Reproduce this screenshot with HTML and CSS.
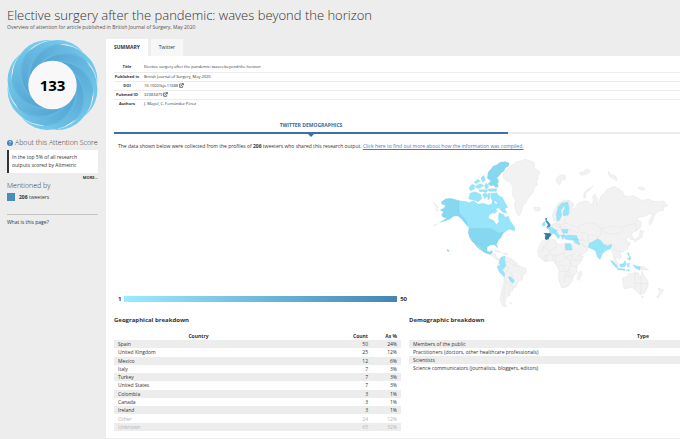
FILE: index.html
```html
<!DOCTYPE html>
<html lang="en">
<head>
  <meta charset="UTF-8">
  <meta name="viewport" content="width=device-width, initial-scale=1.0">
  <title>Elective surgery after the pandemic: waves beyond the horizon</title>
  <link rel="stylesheet" href="styles.css">
</head>
<body>
  <header class="page-header">
    <h1>Elective surgery after the pandemic: waves beyond the horizon</h1>
    <p>Overview of attention for article published in British Journal of Surgery, May 2020</p>
  </header>
  <div class="layout">
    <aside class="sidebar">
      <div class="score">
        <svg class="donut" viewBox="-46 -46 92 92" aria-hidden="true">
          <defs>
            <linearGradient id="petal" gradientUnits="userSpaceOnUse" x1="45" y1="0" x2="-24" y2="0">
              <stop offset="0" stop-color="#76ccee"/>
              <stop offset="1" stop-color="#55a5d2"/>
            </linearGradient>
            <radialGradient id="shade" gradientUnits="userSpaceOnUse" cx="12" cy="0" r="33">
              <stop offset="0.55" stop-color="#3a86b8" stop-opacity="0.7"/>
              <stop offset="1" stop-color="#4a9aca" stop-opacity="0"/>
            </radialGradient>
            <path id="tile" d="M45 0 A33 33 0 0 1 -21 0 L-14.8 -14.8 A33 33 0 0 0 31.8 31.8 A33 33 0 0 0 45 0Z"/>
            <g id="p">
              <use href="#tile" fill="url(#petal)"/>
              <use href="#tile" fill="url(#shade)"/>
            </g>
          </defs>
          <circle r="42" fill="#64b7de"/>
          <g transform="scale(-1 1)">
            <use href="#p"/>
            <use href="#p" transform="rotate(45)"/>
            <use href="#p" transform="rotate(90)"/>
            <use href="#p" transform="rotate(135)"/>
            <use href="#p" transform="rotate(180)"/>
            <use href="#p" transform="rotate(225)"/>
            <use href="#p" transform="rotate(270)"/>
            <use href="#p" transform="rotate(315)"/>
          </g>
          <circle r="24.5" fill="#f8f8f8"/>
        </svg>
        <span class="score-value">133</span>
      </div>
      <h2>
        <svg class="help" viewBox="0 0 12 12" aria-hidden="true"><circle cx="6" cy="6" r="6" fill="#3f7fc0"/><path d="M4 4.6C4 2 8 2 8 4.4 8 5.8 6 5.8 6 7.2M6 8.4V9.8" fill="none" stroke="#fff" stroke-width="1.5"/></svg>
        About this Attention Score
      </h2>
      <p class="context">In the top 5% of all research outputs scored by Altmetric</p>
      <a class="more" href="#">MORE...</a>
      <h2>Mentioned by</h2>
      <p class="mention"><span class="swatch"></span><span><b>206</b> tweeters</span></p>
      <a class="what" href="#">What is this page?</a>
    </aside>
    <main>
      <nav class="tabs">
        <a class="tab active" href="#">SUMMARY</a>
        <a class="tab" href="#">Twitter</a>
      </nav>
      <div class="panel">
        <div class="content">
          <table class="meta">
            <tr><th>Title</th><td>Elective surgery after the pandemic: waves beyond the horizon</td></tr>
            <tr><th>Published in</th><td>British Journal of Surgery, May 2020</td></tr>
            <tr><th>DOI</th><td>10.1002/bjs.11688 <a href="#" aria-label="Open DOI"><svg class="ext" viewBox="0 0 15 14"><path d="M8 2.5H2V12.5H11V8M5 9L12 2.5M8.5 1.2H13.5V6" fill="none" stroke="#333" stroke-width="2"/></svg></a></td></tr>
            <tr><th>Pubmed ID</th><td>32383479 <a href="#" aria-label="Open Pubmed"><svg class="ext" viewBox="0 0 15 14"><path d="M8 2.5H2V12.5H11V8M5 9L12 2.5M8.5 1.2H13.5V6" fill="none" stroke="#333" stroke-width="2"/></svg></a></td></tr>
            <tr><th>Authors</th><td>J. Mayol, C. Fernández Pérez</td></tr>
          </table>
          <div class="section-tabs"><a class="section-tab" href="#">TWITTER DEMOGRAPHICS</a></div>
          <p class="intro">The data shown below were collected from the profiles of <b>206</b> tweeters who shared this research output. <a href="#">Click here to find out more about how the information was compiled.</a></p>
          <div class="geo">
            <div class="scale"><span>1</span><span class="scale-bar"></span><span>50</span></div>
            <svg class="map" viewBox="0 0 765 480" role="img" aria-label="World map of tweeters">
              <!-- Americas -->
              <g class="land">
                <path d="M255 50L275 35 288 33 300 28 325 35 330 45 326 52 340 62 345 70 337 78 340 88 334 92 338 105 328 112 325 125 310 145 304 156 295 165 288 190 282 198 275 190 268 165 273 150 264 140 262 125 264 112 257 98 245 92 232 80 240 65Z"/>
                <path d="M325 174L329 171 335 173 342 171 347 176 343 182 332 184Z"/>
                <path d="M194 313L202 306 212 313 215 325 228 328 226 332 214 329 205 320Z"/>
                <path d="M206 301L218 301 230 308 218 306ZM235 309L248 310 246 315 236 313Z"/>
                <path d="M228 322L240 319 262 328 275 340 285 350 302 354 305 366 292 378 292 388 280 395 272 412 262 416 264 422 254 426 255 436 246 440 242 448 240 458 244 470 232 467 226 448 230 420 236 400 238 380 222 365 216 350 222 338Z"/>
                <path d="M240 332L252 337 260 328M252 337L264 346 275 340M264 346L285 350M242 347L250 352 246 364 238 370M246 364L260 370 264 382 268 392M238 380L242 398 250 398 258 402 264 412 272 412M242 398L238 415 236 450M258 402L252 418" fill="none"/>
                <path d="M254 458L261 458 256 461ZM24 158L34 165 40 174 33 170ZM30 175L40 181 35 182ZM25 226L40 221 29 227Z"/>
              </g>
              <g class="l2">
                <path d="M50 155L62 147 75 145 102 152 102 190 112 196 125 212 130 230 122 222 108 205 98 197 85 199 76 206 58 213 46 217 66 204 55 202 50 194 56 186 46 180 58 174 62 166 50 162Z"/>
                <path class="l1" d="M102 152L125 155 132 158 145 153 160 162 175 160 190 166 200 162 204 148 212 163 222 158 222 172 208 180 203 188 192 195 190 205 205 211 214 224 222 215 220 200 222 188 236 194 240 202 250 199 256 214 264 224 269 240 258 237 248 239 240 246 232 250 222 250 212 244 200 236 132 235 125 212 112 196 102 190Z"/>
                <path d="M132 235L200 236 212 244 222 250 236 247 228 262 221 270 216 280 214 284 218 294 209 284 195 285 188 290 180 288 172 282 165 282 150 278 142 275 134 262 130 248Z"/>
                <path d="M145 276L165 282 172 282 180 288 186 290 186 302 192 306 202 302 200 310 194 313 180 308 168 300 160 285 158 284 165 299 156 290Z"/>
                <path d="M215 45L226 37 240 35 252 39 251 47 240 55 237 63 228 68 222 78 215 83 221 93 217 101 220 110 212 112 205 105 198 108 189 102 198 93 187 84 190 66 198 58 204 49Z"/>
                <path class="l1" d="M196 131L215 128 223 139 232 142 241 160 248 172 239 176 246 190 232 186 222 174 224 165 211 153 201 151Z"/>
                <path class="l1" d="M135 130L150 125 166 132 171 145 160 155 145 150 131 147ZM132 114L141 103 149 106 148 117 137 122ZM147 97L160 88 165 94 154 101ZM152 108L165 101 176 106 165 115 153 114ZM168 84L176 76 181 89 173 97ZM178 108L185 98 191 111 183 118ZM162 119L188 119 186 126 164 125ZM189 117L216 116 213 124 192 124ZM173 133L182 127 187 139 178 146ZM187 132L193 129 196 143 189 150ZM198 184L210 177 217 184 208 190ZM257 239L267 227 270 242Z"/>
                <path class="l1" d="M228 322L240 319 239 329 243 346 238 353 232 345 222 340ZM217 350L228 343 238 352 232 360 239 370 238 380 225 368ZM250 381L257 380 262 386 268 391 264 399 257 395Z"/>
                <path d="M66 298L73 302 69 305Z"/>
              </g>
              <!-- Europe, Asia, Africa and Oceania -->
              <g class="land" transform="translate(330 0)">
                <path d="M52 198L58 180 70 160 88 150 101 150 112 157 117 168 106 170 118 176 130 160 150 152 160 154 172 165 175 150 172 138 180 132 188 148 184 164 194 151 198 137 211 126 216 118 237 109 253 118 263 125 265 136 280 140 295 137 310 145 321 152 340 147 355 154 370 155 386 153 399 167 385 172 387 181 368 184 358 198 352 216 344 226 342 212 354 194 341 191 330 199 311 202 306 208 319 216 317 232 304 243 294 246 290 254 298 269 289 270 280 261 273 267 281 282 278 296 264 306 255 306 260 320 254 329 245 321 242 326 251 344 246 346 238 332 232 307 228 295 215 300 202 310 195 328 188 322 182 302 174 298 160 292 146 288 139 280 152 292 160 295 154 306 132 319 125 306 113 283 114 274 128 268 90 268 86 258 76 254 66 247 60 240 46 240 38 232 53 223 62 219 64 211 56 213Z"/>
                <path d="M22 272L37 272 50 268 60 270 66 280 78 284 91 280 108 281 118 300 126 318 145 318 140 332 125 350 127 367 116 378 110 395 98 410 80 414 70 385 73 363 62 342 55 332 30 335 12 320 8 305 12 290Z"/>
                <path d="M130 370L138 363 141 371 132 392 126 386ZM262 385L275 380 282 370 295 370 300 365 312 370 311 377 318 380 321 363 328 379 338 392 340 408 328 430 316 434 303 422 292 412 267 416ZM319 438L325 438 323 444ZM370 414L377 417 386 419 380 430 368 445 365 440 374 430ZM313 349L327 350 341 360 331 360 318 359Z"/>
                <path d="M316 240L328 245 321 249 322 260 312 267 304 272 300 277 297 271 312 261ZM282 276L286 279 282 287ZM146 145L148 127 160 116 174 108 165 119 153 128 151 144ZM64 85L77 74 90 75 91 89 80 91 74 105 65 98ZM132 69L145 66 154 57 166 64 155 73 139 76ZM219 63L228 72 242 78 247 92 233 86 222 77ZM308 113L322 111 331 118 318 120Z"/>
                <path d="M101 150L104 175 103 190 90 208 92 220 108 223 120 230 130 235 133 228 160 218 180 222 200 234 217 232 235 228 258 232 280 225 302 221 304 243M200 234L207 246 228 252 250 250 265 239 258 232M130 235L137 249 151 248 160 256 176 253 188 262 196 255 200 234M98 238L110 240 130 250M128 268L143 271 160 275 163 280M143 271L141 255M160 275L160 256M205 283L218 283 230 283 240 291 237 298 247 302 255 306M63 220L76 224 92 220M65 231L80 231 96 229M76 224L76 238M64 230L61 220M52 226L54 236" fill="none"/>
                <path d="M38 272L38 280 25 290 25 303 10 303M25 290L45 304 61 294 66 280M45 304L43 314 27 316 28 334M43 314L64 316 86 309 92 300 91 280M64 316L61 340M86 309L91 323 112 314 119 303M91 323L75 335 62 340M91 323L106 331 111 349 126 350M106 331L105 345 99 365 112 375M73 363L99 365 89 376 87 398M89 376L112 380M72 345L86 346 90 362M112 314L112 328 128 332 139 327M55 332L55 315M34 334L34 316M300 366L300 417M318 380L316 400 338 402M300 400L316 400M319 400L316 434" fill="none"/>
              </g>
              <g class="l1" transform="translate(330 0)">
                <path d="M66 213L64 192 70 170 81 158 85 170 77 183 80 195 74 210ZM82 160L98 156 102 175 100 194 86 198 84 186 90 174Z"/>
                <path d="M22 221L29 214 31 226 23 229ZM35 235L46 230 60 238 58 250 45 252 43 241ZM54 242L67 240 65 246 75 258 70 266 59 252ZM79 238L99 238 98 249 84 250ZM77 256L89 254 84 269ZM88 257L102 255 125 257 129 269 110 271 91 267ZM114 266L129 268 135 285 121 279ZM91 281L108 281 111 300 92 300Z"/>
                <path d="M160 292L163 280 178 272 188 266 198 272 205 283 218 288 230 283 228 295 215 300 202 310 195 328 188 322 182 302 174 298Z"/>
                <path d="M226 331L234 334 249 350 246 355 236 345ZM247 355L271 357 269 361 249 359ZM254 343L264 342 270 332 274 342 268 351 256 350ZM277 341L285 340 281 345 286 352 280 348 277 352ZM294 344L304 348 315 350 315 361 300 353ZM277 308L282 309 283 318 288 324 285 331 277 327 283 322ZM273 360L285 359 280 363Z"/>
              </g>
              <g transform="translate(330 0)">
                <path fill="#4a91b9" d="M30 205L37 203 35 210 40 215 47 224 44 231 33 233 39 225 33 216Z"/>
                <path fill="#337aa8" d="M25 249L45 250 50 254 43 262 41 268 33 270 30 266 31 254Z"/>
              </g>
            </svg>
          </div>
          <div class="breakdowns">
            <section class="geographical">
              <h3>Geographical breakdown</h3>
              <table class="data">
                <thead><tr><th>Country</th><th class="num count">Count</th><th class="num">As %</th></tr></thead>
                <tbody>
                  <tr><td>Spain</td><td class="num">50</td><td class="num">24%</td></tr>
                  <tr><td>United Kingdom</td><td class="num">25</td><td class="num">12%</td></tr>
                  <tr><td>Mexico</td><td class="num">12</td><td class="num">6%</td></tr>
                  <tr><td>Italy</td><td class="num">7</td><td class="num">3%</td></tr>
                  <tr><td>Turkey</td><td class="num">7</td><td class="num">3%</td></tr>
                  <tr><td>United States</td><td class="num">7</td><td class="num">3%</td></tr>
                  <tr><td>Colombia</td><td class="num">3</td><td class="num">1%</td></tr>
                  <tr><td>Canada</td><td class="num">3</td><td class="num">1%</td></tr>
                  <tr><td>Ireland</td><td class="num">3</td><td class="num">1%</td></tr>
                  <tr class="faded"><td>Other</td><td class="num">24</td><td class="num">12%</td></tr>
                  <tr class="faded"><td>Unknown</td><td class="num">65</td><td class="num">32%</td></tr>
                </tbody>
              </table>
            </section>
            <section class="demographic">
              <h3>Demographic breakdown</h3>
              <table class="data">
                <thead><tr><th>Type</th><th class="num"></th></tr></thead>
                <tbody>
                  <tr><td>Members of the public</td><td></td></tr>
                  <tr><td>Practitioners (doctors, other healthcare professionals)</td><td></td></tr>
                  <tr><td>Scientists</td><td></td></tr>
                  <tr><td>Science communicators (journalists, bloggers, editors)</td><td></td></tr>
                </tbody>
              </table>
            </section>
          </div>
        </div>
      </div>
    </main>
  </div>
</body>
</html>
```
FILE: styles.css
```css
* {
  box-sizing: border-box;
}
body {
  margin: 0;
  background: #ededed;
  color: #333;
  font-family: "Open Sans", sans-serif;
  font-size: 5px;
  line-height: 8px;
  overflow-x: hidden;
}
h1, h2, h3, p {
  margin: 0;
}
a {
  color: inherit;
  text-decoration: none;
}
table {
  border-collapse: collapse;
}
th, td {
  padding: 0;
}
.page-header {
  padding: 6px 7px 8px;
}
.page-header h1 {
  font-size: 13px;
  font-weight: 300;
  line-height: 18px;
}
.page-header p {
  line-height: 7px;
  color: #555;
}
.layout {
  display: flex;
}

/* sidebar */
.sidebar {
  flex: none;
  width: 106px;
  padding: 0 8px 0 7px;
}
.score {
  display: grid;
  place-items: center;
}
.donut, .score-value {
  grid-area: 1 / 1;
}
.donut {
  display: block;
  width: 91px;
  height: 92px;
}
.score-value {
  font-size: 15px;
  font-weight: bold;
  line-height: 20px;
  color: #000;
}
.sidebar h2 {
  display: flex;
  align-items: center;
  gap: 2px;
  font-size: 7px;
  font-weight: 300;
  line-height: 9px;
  white-space: nowrap;
}
.score + h2 {
  margin: 7px 0 3px;
}
.help {
  width: 6px;
  height: 6px;
}
.context {
  padding: 3px 16px 4px 3px;
  background: #fff;
  border-left: 2px solid #333;
}
.more {
  display: block;
  padding-top: 1px;
  font-size: 4px;
  font-weight: bold;
  line-height: 7px;
  text-align: right;
}
.mention {
  display: flex;
  gap: 4px;
  padding: 3px 0 13px;
  border-bottom: 1px solid #c4c4c4;
}
.swatch {
  width: 8px;
  height: 8px;
  background: #458fba;
}
.what {
  display: block;
  padding-top: 3px;
}

/* main panel */
main {
  display: flex;
  flex-direction: column;
  flex: 1;
  min-width: 0;
}
.tabs {
  display: flex;
  gap: 3px;
}
.tab {
  padding: 4px 8px 5px;
  background: #f7f7f7;
}
.tab.active {
  background: #fff;
  font-weight: bold;
}
.panel {
  flex: 1;
  padding: 7px 8px;
  background: #fff;
  overflow: hidden;
}
.content {
  min-width: 788px;
}
.meta {
  width: 100%;
  font-size: 4px;
}
.meta th {
  width: 26px;
}
.meta th, .meta td {
  height: 9px;
  border-bottom: 1px solid #ececec;
}
.meta tr:last-child > * {
  border-bottom: none;
}
.meta td {
  padding-left: 4px;
}
.ext {
  width: 5px;
  height: 5px;
  vertical-align: -1px;
}
.section-tabs {
  margin-top: 13px;
  border-bottom: 2px solid #ececec;
}
.section-tab {
  position: relative;
  display: block;
  width: 50%;
  height: 13px;
  margin-bottom: -2px;
  border-bottom: 2px solid #3f6fa8;
  color: #3568a6;
  font-weight: bold;
  text-align: center;
}
.section-tab::after {
  content: "";
  position: absolute;
  top: 100%;
  left: 50%;
  border: 5px solid transparent;
  border-top-color: #3f6fa8;
  border-bottom: none;
  transform: translateX(-50%);
}
.intro {
  padding: 8px 4px 0;
}
.intro a {
  color: #3b7dd0;
  text-decoration: underline;
}
.geo {
  display: flex;
  align-items: flex-end;
  gap: 18px;
}
.scale {
  display: flex;
  align-items: center;
  gap: 3px;
  width: 293px;
  padding: 0 0 7px 4px;
  font-size: 6px;
  font-weight: bold;
}
.scale-bar {
  flex: 1;
  height: 6px;
  background: linear-gradient(to right, #9aecff, #4385b4);
}
.map {
  display: block;
  width: 255px;
  height: 160px;
}
.land {
  fill: #f2f2f2;
  stroke: #dcdcdc;
}
.l1 {
  fill: #96e5fa;
  stroke: #85d2ea;
}
.l2 {
  fill: #86d7f0;
  stroke: #76c5df;
}
.breakdowns {
  display: flex;
  gap: 8px;
  padding-top: 6px;
}
.geographical {
  width: 287px;
}
.demographic {
  flex: 1;
}
.breakdowns h3 {
  padding-bottom: 7px;
  font-size: 6px;
  line-height: 9px;
}
.data {
  width: 100%;
}
.geographical .data {
  height: 99px;
}
.data th, .data td {
  height: 8px;
  padding-left: 4px;
}
.data .num {
  width: 29px;
  padding: 0 4px 0 0;
  text-align: right;
}
.data .count {
  width: 93px;
}
.data tbody tr:nth-child(odd) {
  background: #ededed;
}
.data .faded {
  color: #b5b5b5;
}
```
